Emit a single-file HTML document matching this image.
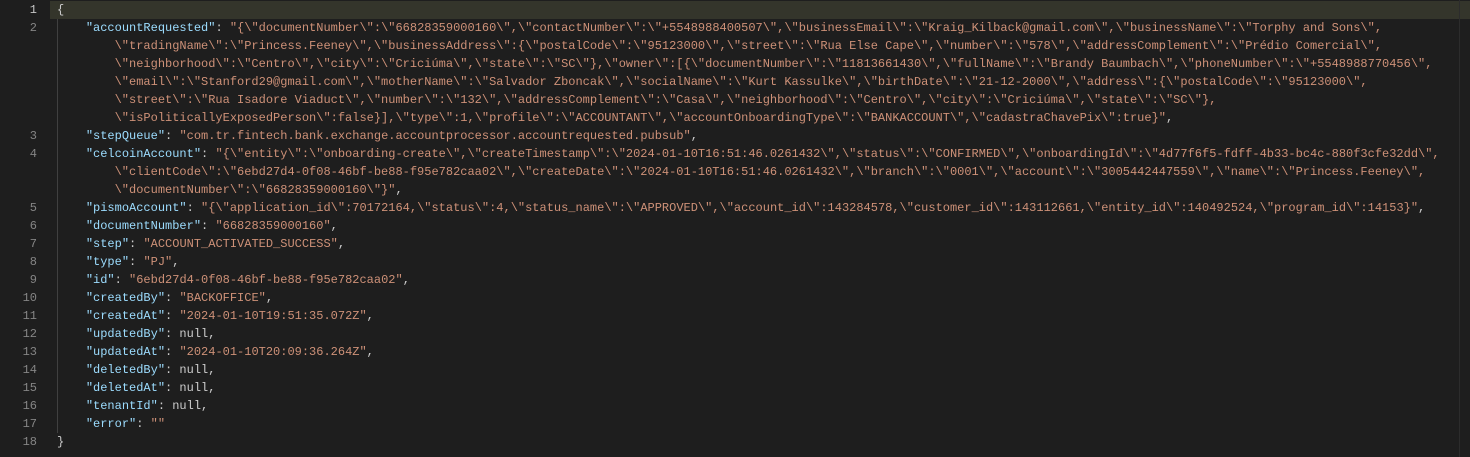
<!DOCTYPE html>
<html><head><meta charset="utf-8"><style>
html,body{margin:0;padding:0;background:#1e1e1e;width:1470px;height:457px;overflow:hidden}
.ed{position:relative;font-family:"Liberation Mono",monospace;font-size:12px;line-height:18px;}
.r{position:relative;height:18px;white-space:pre;}
.n{position:absolute;left:0;width:37px;text-align:right;color:#858585}
.c{position:absolute;left:57px;color:#cccccc}
.k{color:#9cdcfe}.s{color:#ce9178}
.hl{position:absolute;left:0;right:0;top:1px;height:18px;background:#2f302a}
.hl2{position:absolute;left:50px;right:0;top:1px;height:18px;background:#34352b}
.guide{position:absolute;left:57px;top:19px;width:1px;height:414px;background:#404040}
.sb{position:absolute;left:1459px;top:0;width:1px;height:457px;background:#2c2c2c}
</style></head><body><div class="ed">
<div class="hl2"></div><div class="guide"></div><div class="sb"></div>
<div style="height:1px"></div>
<div class="r"><span class="n" style="color:#c6c6c6">1</span><span class="c">{</span></div>
<div class="r"><span class="n">2</span><span class="c">    <span class="k">"accountRequested"</span>: <span class="s">"{\"documentNumber\":\"66828359000160\",\"contactNumber\":\"+5548988400507\",\"businessEmail\":\"Kraig_Kilback@gmail.com\",\"businessName\":\"Torphy and Sons\",</span></span></div>
<div class="r"><span class="c"><span class="s">        \"tradingName\":\"Princess.Feeney\",\"businessAddress\":{\"postalCode\":\"95123000\",\"street\":\"Rua Else Cape\",\"number\":\"578\",\"addressComplement\":\"Prédio Comercial\",</span></span></div>
<div class="r"><span class="c"><span class="s">        \"neighborhood\":\"Centro\",\"city\":\"Criciúma\",\"state\":\"SC\"},\"owner\":[{\"documentNumber\":\"11813661430\",\"fullName\":\"Brandy Baumbach\",\"phoneNumber\":\"+5548988770456\",</span></span></div>
<div class="r"><span class="c"><span class="s">        \"email\":\"Stanford29@gmail.com\",\"motherName\":\"Salvador Zboncak\",\"socialName\":\"Kurt Kassulke\",\"birthDate\":\"21-12-2000\",\"address\":{\"postalCode\":\"95123000\",</span></span></div>
<div class="r"><span class="c"><span class="s">        \"street\":\"Rua Isadore Viaduct\",\"number\":\"132\",\"addressComplement\":\"Casa\",\"neighborhood\":\"Centro\",\"city\":\"Criciúma\",\"state\":\"SC\"},</span></span></div>
<div class="r"><span class="c"><span class="s">        \"isPoliticallyExposedPerson\":false}],\"type\":1,\"profile\":\"ACCOUNTANT\",\"accountOnboardingType\":\"BANKACCOUNT\",\"cadastraChavePix\":true}"</span>,</span></div>
<div class="r"><span class="n">3</span><span class="c">    <span class="k">"stepQueue"</span>: <span class="s">"com.tr.fintech.bank.exchange.accountprocessor.accountrequested.pubsub"</span>,</span></div>
<div class="r"><span class="n">4</span><span class="c">    <span class="k">"celcoinAccount"</span>: <span class="s">"{\"entity\":\"onboarding-create\",\"createTimestamp\":\"2024-01-10T16:51:46.0261432\",\"status\":\"CONFIRMED\",\"onboardingId\":\"4d77f6f5-fdff-4b33-bc4c-880f3cfe32dd\",</span></span></div>
<div class="r"><span class="c"><span class="s">        \"clientCode\":\"6ebd27d4-0f08-46bf-be88-f95e782caa02\",\"createDate\":\"2024-01-10T16:51:46.0261432\",\"branch\":\"0001\",\"account\":\"3005442447559\",\"name\":\"Princess.Feeney\",</span></span></div>
<div class="r"><span class="c"><span class="s">        \"documentNumber\":\"66828359000160\"}"</span>,</span></div>
<div class="r"><span class="n">5</span><span class="c">    <span class="k">"pismoAccount"</span>: <span class="s">"{\"application_id\":70172164,\"status\":4,\"status_name\":\"APPROVED\",\"account_id\":143284578,\"customer_id\":143112661,\"entity_id\":140492524,\"program_id\":14153}"</span>,</span></div>
<div class="r"><span class="n">6</span><span class="c">    <span class="k">"documentNumber"</span>: <span class="s">"66828359000160"</span>,</span></div>
<div class="r"><span class="n">7</span><span class="c">    <span class="k">"step"</span>: <span class="s">"ACCOUNT_ACTIVATED_SUCCESS"</span>,</span></div>
<div class="r"><span class="n">8</span><span class="c">    <span class="k">"type"</span>: <span class="s">"PJ"</span>,</span></div>
<div class="r"><span class="n">9</span><span class="c">    <span class="k">"id"</span>: <span class="s">"6ebd27d4-0f08-46bf-be88-f95e782caa02"</span>,</span></div>
<div class="r"><span class="n">10</span><span class="c">    <span class="k">"createdBy"</span>: <span class="s">"BACKOFFICE"</span>,</span></div>
<div class="r"><span class="n">11</span><span class="c">    <span class="k">"createdAt"</span>: <span class="s">"2024-01-10T19:51:35.072Z"</span>,</span></div>
<div class="r"><span class="n">12</span><span class="c">    <span class="k">"updatedBy"</span>: null,</span></div>
<div class="r"><span class="n">13</span><span class="c">    <span class="k">"updatedAt"</span>: <span class="s">"2024-01-10T20:09:36.264Z"</span>,</span></div>
<div class="r"><span class="n">14</span><span class="c">    <span class="k">"deletedBy"</span>: null,</span></div>
<div class="r"><span class="n">15</span><span class="c">    <span class="k">"deletedAt"</span>: null,</span></div>
<div class="r"><span class="n">16</span><span class="c">    <span class="k">"tenantId"</span>: null,</span></div>
<div class="r"><span class="n">17</span><span class="c">    <span class="k">"error"</span>: <span class="s">""</span></span></div>
<div class="r"><span class="n">18</span><span class="c">}</span></div>
</div></body></html>
